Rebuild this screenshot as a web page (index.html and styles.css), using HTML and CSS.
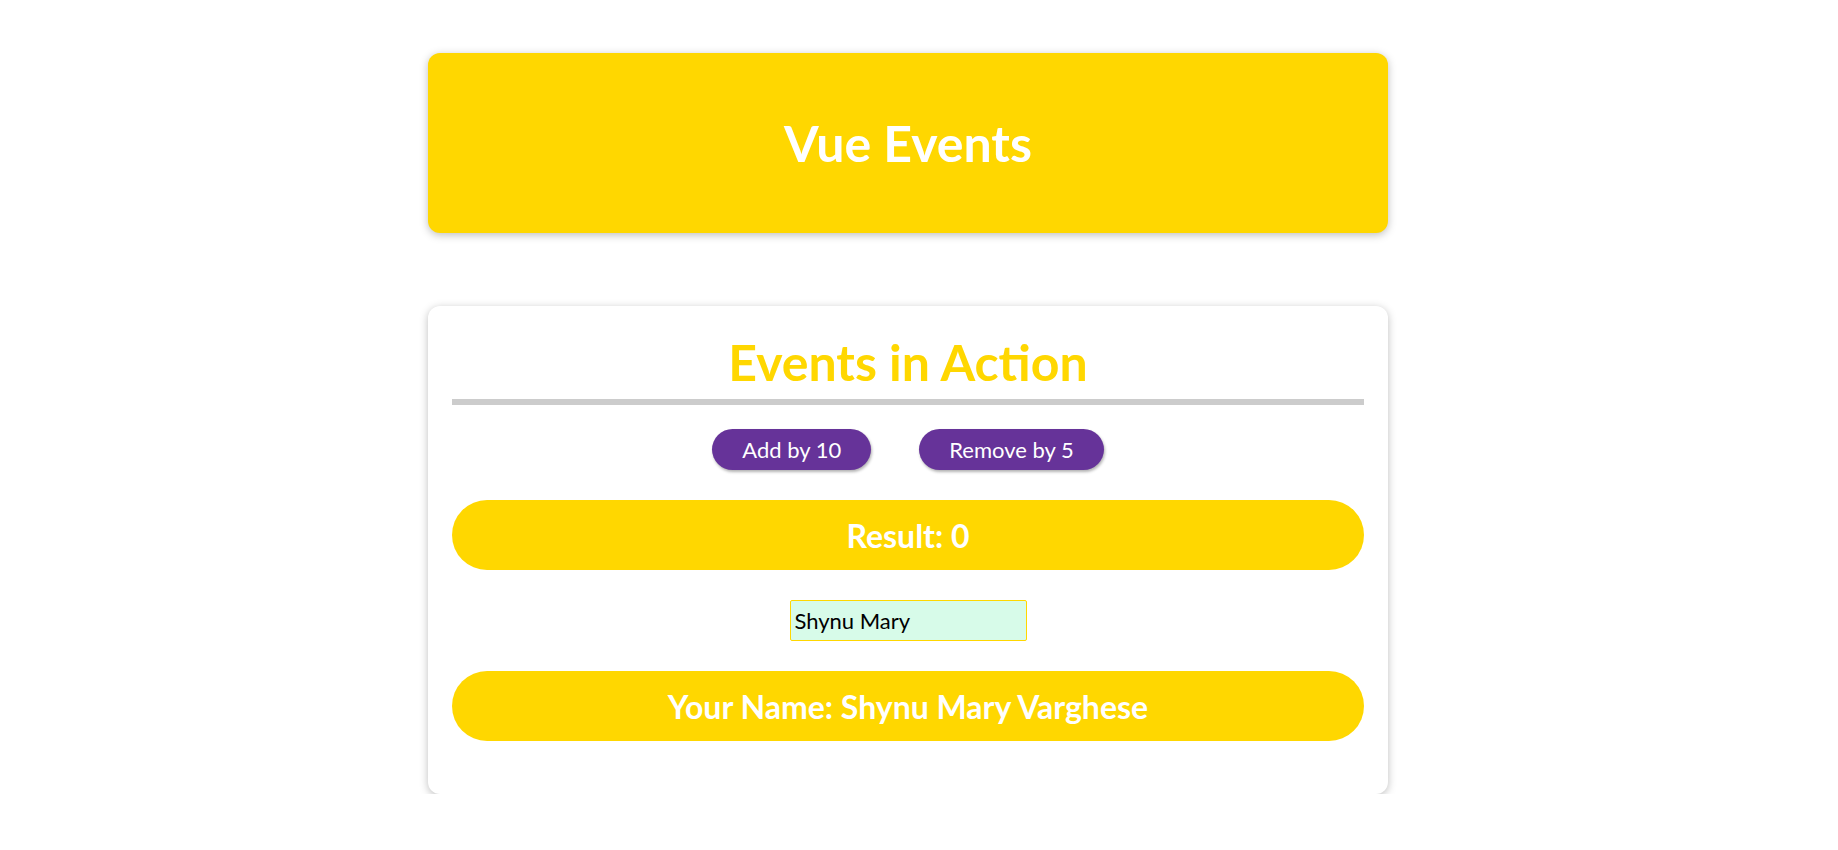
FILE: index.html
```html
<!DOCTYPE html>
<html lang="en">
<head>
<meta charset="utf-8">
<title>Vue Events</title>
<link rel="stylesheet" href="styles.css">
</head>
<body>
<div class="page">
  <header class="hero">
    <h1 class="hero-title">Vue Events</h1>
  </header>
  <section class="events">
    <h2 class="events-title">Events in Action</h2>
    <hr class="divider">
    <div class="actions">
      <button class="btn">Add by 10</button>
      <button class="btn">Remove by 5</button>
    </div>
    <p class="pill">Result: 0</p>
    <div class="field-row">
      <input class="name-input" type="text" value="Shynu Mary" autofocus>
    </div>
    <p class="pill">Your Name: Shynu Mary Varghese</p>
  </section>
</div>
</body>
</html>
```
FILE: styles.css
```css
* { box-sizing: border-box; }
html, body { margin: 0; padding: 0; background: #fff; }
body { font-family: Lato, "Open Sans", sans-serif; }

.page {
  display: flex;
  flex-direction: column;
  align-items: center;
  padding: 53px 22px 0 0;
}

.hero {
  width: 960px;
  height: 180px;
  background: #ffd700;
  border-radius: 12px;
  box-shadow: 0 2px 8px rgba(0, 0, 0, 0.26);
  display: flex;
  align-items: center;
  justify-content: center;
}
.hero-title {
  margin: 0;
  color: #fff;
  font-size: 50px;
  font-weight: 700;
  line-height: 60px;
}

.events {
  width: 960px;
  margin-top: 73px;
  background: #fff;
  border-radius: 12px;
  box-shadow: 0 2px 8px rgba(0, 0, 0, 0.26);
  padding: 27px 24px 53px;
  display: flex;
  flex-direction: column;
}
.events-title {
  margin: 0;
  text-align: center;
  color: #ffd700;
  font-size: 50px;
  font-weight: 700;
  line-height: 58px;
}
.divider {
  margin: 8px 0 0;
  border: 0;
  height: 6px;
  background: #cccccc;
}
.actions {
  margin-top: 24px;
  display: flex;
  justify-content: center;
  gap: 48px;
}
.btn {
  font-family: inherit;
  font-size: 22px;
  height: 41px;
  padding: 0 30px;
  border: 0;
  border-radius: 21px;
  background: #663399;
  color: #fff;
  box-shadow: 1px 2px 3px rgba(0, 0, 0, 0.3);
  cursor: pointer;
}
.pill {
  margin: 30px 0 0;
  height: 70px;
  border-radius: 35px;
  background: #ffd700;
  color: #fff;
  font-size: 32px;
  font-weight: 700;
  display: flex;
  align-items: center;
  justify-content: center;
}
.field-row {
  margin-top: 30px;
  display: flex;
  justify-content: center;
}
.name-input {
  width: 237px;
  height: 41px;
  font-family: inherit;
  font-size: 22px;
  padding: 0 4px;
  color: #000;
  background: #d7fbe9;
  border: 1px solid #ffd700;
  border-radius: 2px;
  outline: none;
}
```
